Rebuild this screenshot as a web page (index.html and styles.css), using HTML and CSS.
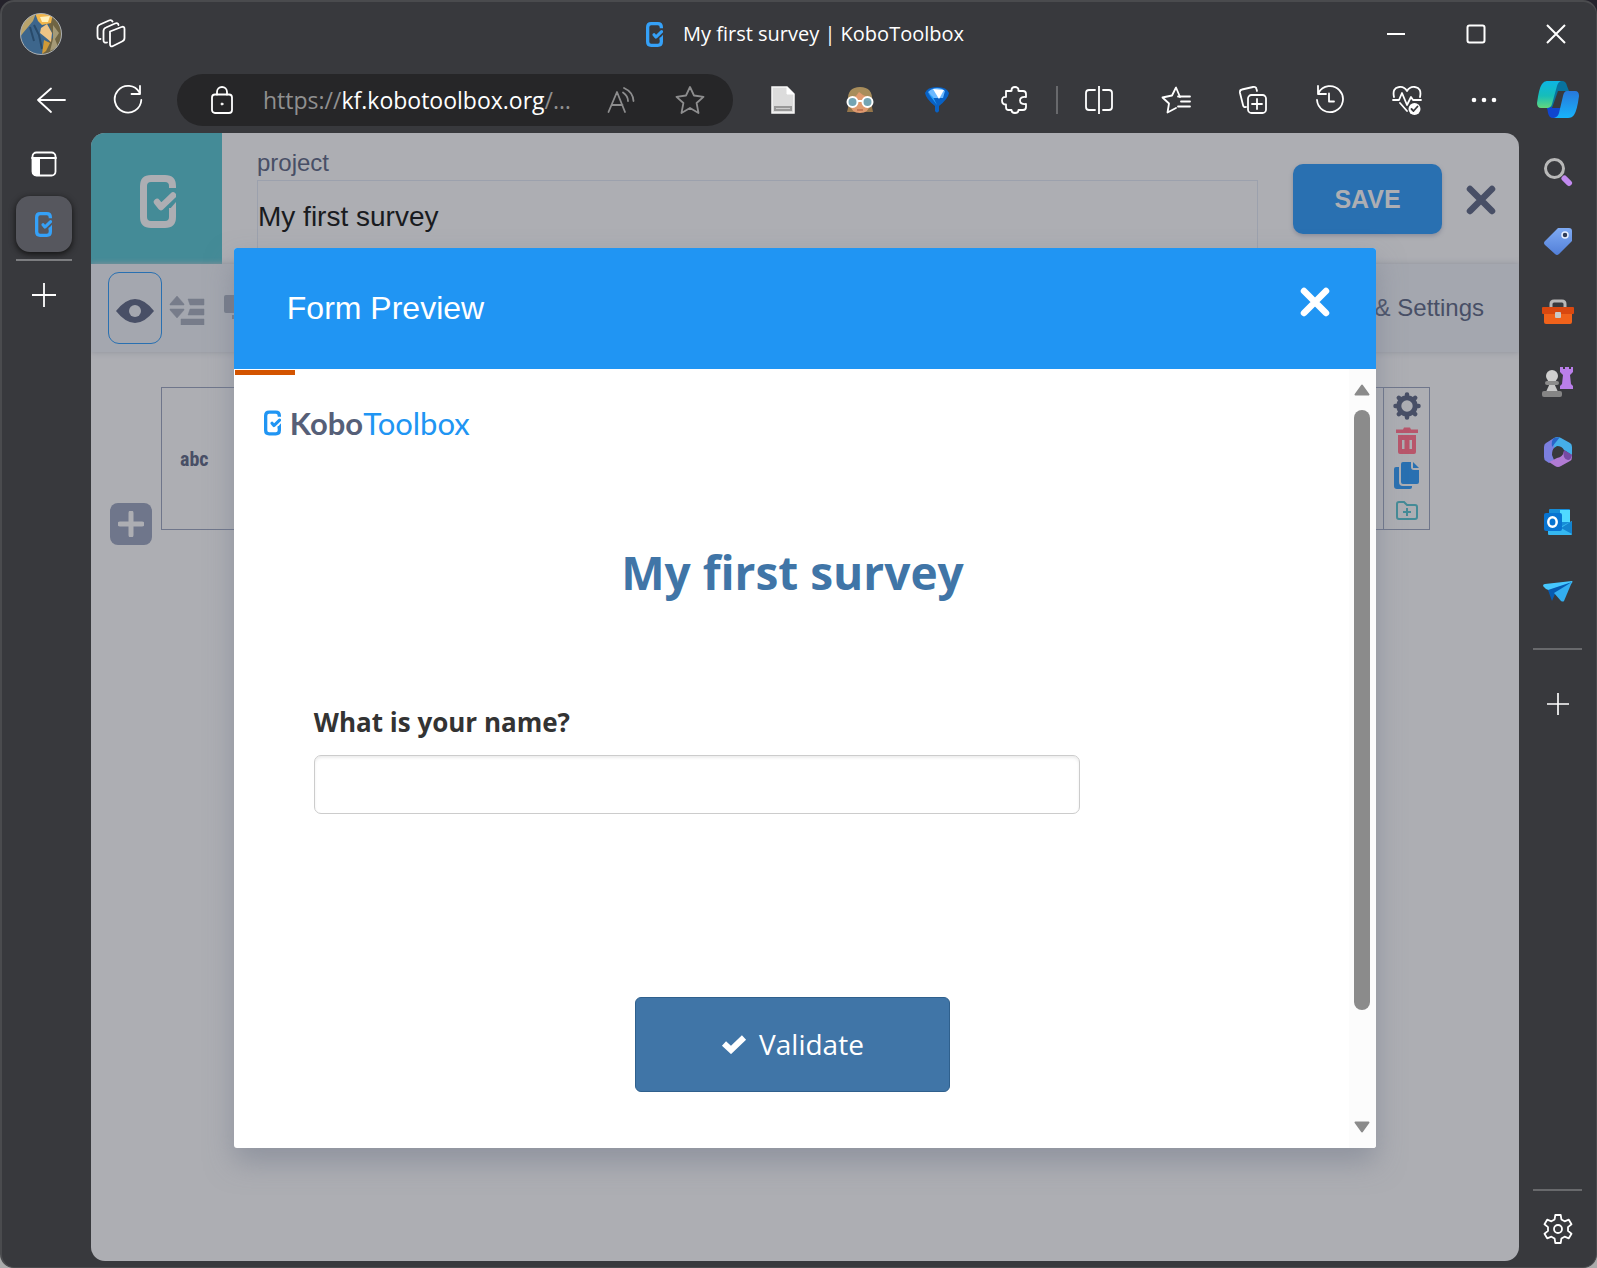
FILE: index.html
```html
<!DOCTYPE html>
<html lang="en">
<head>
<meta charset="utf-8">
<title>My first survey | KoboToolbox</title>
<link rel="stylesheet" href="styles.css">
</head>
<body>
<svg class="defs" aria-hidden="true">
  <symbol id="kobo" viewBox="0 0 36 53">
    <path d="M32.5 13V11Q32.5 3.5 25 3.5H11Q3.5 3.5 3.5 11V42Q3.5 49.5 11 49.5H25Q32.5 49.5 32.5 42V33" fill="none" stroke="currentColor" stroke-width="7"/>
    <path d="M29 35L36 27V38H29z" fill="currentColor"/>
    <path d="M17 27L21 32L33 20.500" fill="none" stroke="currentColor" stroke-width="6.500" stroke-linecap="round" stroke-linejoin="round"/>
  </symbol>
  <symbol id="cross" viewBox="0 0 30 30">
    <path d="M4 4L26 26M26 4L4 26" stroke="currentColor" stroke-width="6.500" stroke-linecap="round"/>
  </symbol>
  <symbol id="plus" viewBox="0 0 24 24">
    <path d="M12 0V24M0 12H24" stroke="currentColor" stroke-width="1.800"/>
  </symbol>
</svg>

<div class="window">
  <header class="titlebar">
    <div class="title-left">
      <button class="avatar" aria-label="Profile">
        <svg width="42" height="42" viewBox="0 0 42 42">
          <defs><clipPath id="round"><circle cx="21" cy="21" r="20.500"/></clipPath></defs>
          <g clip-path="url(#round)">
            <rect width="42" height="42" fill="#3d668c"/>
            <path d="M0 0H16L13 8L3 20L0 24z" fill="#b9a46c"/>
            <path d="M28 0H42V42H22L27 30L34 24L29 12z" fill="#6f6443"/>
            <path d="M33 12L39 20L35 26L38 34L30 38L33 26z" fill="#a59a77"/>
            <path d="M15 0H33L31 10L22 12L18 8z" fill="#f2b64a"/>
            <path d="M20 4L30 3L28 9L22 9z" fill="#fff0ba"/>
            <path d="M21 15L27 11L32 20L31 29L25 24L20 20z" fill="#eec486"/>
            <path d="M14 12L19 22L22 36M10 14L14 28" stroke="#284a6a" stroke-width="2" fill="none"/>
            <path d="M24 27L30 30L26 38L22 41z" fill="#d09a37"/>
          </g>
          <circle cx="21" cy="21" r="20.500" fill="none" stroke="#aeb1b3"/>
        </svg>
      </button>
      <button class="icon" aria-label="Workspaces">
        <svg width="30" height="30" viewBox="0 0 30 30" class="line">
          <path d="M14 12.500L25.500 8Q28.500 7 28.500 10V19Q28.500 21.500 26 22.500L17 27Q14 28.500 14 25V14z"/>
          <path d="M11 23.500Q7.500 24.500 7.500 21V12Q7.500 9.500 10 8.500L19 4.500Q22 3.500 22.500 6"/>
          <path d="M4.500 20Q1.500 20.500 1.500 17V9Q1.500 6.500 4 5.500L13 1.500Q15.500 .5 16.500 2.500"/>
        </svg>
      </button>
    </div>
    <div class="title-text">
      <svg class="favicon" width="17" height="25"><use href="#kobo"/></svg>
      <span>My first survey | KoboToolbox</span>
    </div>
    <div class="controls">
      <button aria-label="Minimize"><svg width="20" height="20"><path d="M1 10H19" stroke="#fff" stroke-width="2"/></svg></button>
      <button aria-label="Maximize"><svg width="20" height="20"><rect x="1.500" y="1.500" width="17" height="17" rx="2" fill="none" stroke="#fff" stroke-width="2"/></svg></button>
      <button aria-label="Close window"><svg width="20" height="20"><path d="M1 1L19 19M19 1L1 19" stroke="#fff" stroke-width="2"/></svg></button>
    </div>
  </header>

  <nav class="toolbar" aria-label="Browser toolbar">
    <button class="tool" aria-label="Back"><svg width="30" height="30" class="line"><path d="M29 15H2M15 3.500L2 15L15 27"/></svg></button>
    <button class="tool" aria-label="Refresh"><svg width="30" height="30" class="line"><path d="M26.500 7.500A13.300 13.300 0 1 0 28.300 15"/><path d="M27 1V9H18.500"/></svg></button>
    <div class="address">
      <svg width="22" height="28" viewBox="0 0 22 28" class="line"><rect x="1" y="8.500" width="20" height="18.500" rx="3"/><path d="M6 8.500V6A5 5 0 0 1 16 6V8.500"/><circle cx="11" cy="18" r="1" fill="#fff" stroke-width="1"/></svg>
      <p class="url">https://<b>kf.kobotoolbox.org</b>/…</p>
      <button class="pill-icon" aria-label="Read aloud"><svg width="28" height="26" viewBox="0 0 28 26" class="line dim"><path d="M1.500 25L10 5L18 25M4.500 18H15.500M16 5.500Q21 9 21 14M17 1Q26 5 26.500 14"/></svg></button>
      <button class="pill-icon" aria-label="Favorite"><svg width="30" height="28" viewBox="0 0 30 28" class="line dim"><path d="M15 1L19 9.500L28.500 10.800L21.600 17L23.500 27L15 22L6.500 27L8.400 17L1.500 10.800L11 9.500z"/></svg></button>
    </div>
    <button class="tool" aria-label="Document extension"><svg width="24" height="28" viewBox="0 0 24 28"><path d="M1 1H16L23 8V27H1z" fill="#dcdcdc" stroke="#f7f7f7" stroke-width="1.500"/><path d="M16 1V8H23" fill="#fff" stroke="#fff"/><rect x="3" y="20" width="18" height="5" fill="#999"/><path d="M5 22.500H19" stroke="#ccc"/></svg></button>
    <button class="tool" aria-label="Reader extension"><svg width="28" height="28" viewBox="0 0 28 28"><path d="M3 18L1 26H27L25 16z" fill="#96764a"/><path d="M2 15Q1 1 14 1T26 15z" fill="#a88d5b"/><path d="M4 12L10 10L13 6L17 9L24 12V18Q23 27 14 27T4 18z" fill="#df9a6f"/><circle cx="6.500" cy="16" r="5" fill="#75a4b3" stroke="#fff" stroke-width="2"/><circle cx="21.500" cy="16" r="5" fill="#75a4b3" stroke="#fff" stroke-width="2"/><path d="M11.500 15H16.500" stroke="#fff" stroke-width="2"/><path d="M11 24H17" stroke="#a8553a"/></svg></button>
    <button class="tool" aria-label="Map extension"><svg width="24" height="28" viewBox="0 0 24 28"><path d="M0 7Q2 1 12 1T24 7Q23 13 14 20V25Q12 28 10 25V20Q1 13 0 7z" fill="#0861c5"/><path d="M3 6Q7 2 12 2T20 5L18 12H8z" fill="#6bb9ff"/><path d="M8 3L19 4L14 13z" fill="#fff"/><path d="M3 7L12 19L8 11z" fill="#27a4ff"/></svg></button>
    <button class="tool" aria-label="Extensions"><svg width="26" height="28" viewBox="0 0 26 28" class="line"><path d="M5 5H10Q11 5 10.500 4Q10.500 1 14 1T17.500 4Q17 5 18 5H22Q25 5 25 8V11Q19 10.500 19 14.500T25 18V21Q25 24 22 24H17.500Q17.500 27 14 27T10.500 24H7Q5 24 5 21V18.500Q1 18.500 1 14.500T5 11z"/></svg></button>
    <i class="divider"></i>
    <button class="tool" aria-label="Split screen"><svg width="28" height="28" viewBox="0 0 28 28" class="line"><path d="M14 0V28M10 4H4Q1 4 1 7V21Q1 24 4 24H10M18 4H24Q27 4 27 7V21Q27 24 24 24H18"/></svg></button>
    <button class="tool" aria-label="Favorites"><svg width="30" height="28" viewBox="0 0 30 28" class="line"><path d="M19 11L15 1.500L11 9.500L1.500 11.500L8 17.500L6.500 26.500L15 22"/><path d="M17 10.500H29M20 15.500H29M17 20.500H29"/></svg></button>
    <button class="tool" aria-label="Collections"><svg width="28" height="28" viewBox="0 0 28 28" class="line"><rect x="9" y="9" width="18" height="18" rx="3.500"/><path d="M18 13V23M13 18H23M7 21Q4.500 21.500 4 19L1 7Q.5 4 3 3.500L14 1Q17 .5 17.500 3L18 5"/></svg></button>
    <button class="tool" aria-label="History"><svg width="30" height="30" viewBox="0 0 30 30" class="line"><path d="M3.500 8A13 13 0 1 1 2 15M3 1V9H11M14 8.500V16.500H19"/></svg></button>
    <button class="tool" aria-label="Browser essentials"><svg width="30" height="30" viewBox="0 0 30 30" class="line"><path d="M2 12Q0 3 7 2Q12 1 15 6Q18 1 23 2Q30 3 28 12M1 15H7L10 8L15 20L19 12L21 15H29M8 18L15 26"/><circle cx="22.500" cy="24" r="6" fill="#fff" stroke="none"/><path d="M19.500 24L21.500 26L25.500 21.500" stroke="#38393d"/></svg></button>
    <button class="tool" aria-label="More"><svg width="26" height="6"><g fill="#fff"><circle cx="3" cy="3" r="2.300"/><circle cx="13" cy="3" r="2.300"/><circle cx="23" cy="3" r="2.300"/></g></svg></button>
    <button class="tool" aria-label="Copilot"><svg width="42" height="38" viewBox="0 0 42 38"><defs><linearGradient id="c1" x2="0" y2="1"><stop stop-color="#0cb5e4"/><stop offset=".55" stop-color="#16bdb9"/><stop offset="1" stop-color="#63d87d"/></linearGradient><linearGradient id="c2" x2="0" y2="1"><stop stop-color="#2878dc"/><stop offset="1" stop-color="#17b3fb"/></linearGradient></defs><path d="M9 0H25Q29 0 30 5L32 10H26Q22 10 20 15L16 28H10z" fill="#08739f"/><path d="M10 26H20L24 16L28 20L27 37H16Q12 37 11 32z" fill="#1045cf"/><path d="M15 27L21 10H29L24 27z" fill="#38393d"/><path d="M10 0H24Q21 1 20 5L15 23Q14 27 10 27H4Q0 27 0 22Q2 7 5 3Q7 0 10 0z" fill="url(#c1)"/><path d="M30 10H38Q42 10 42 15Q40 30 37 34Q35 37 31 37H17Q21 36 22 32L26 15Q27 10 30 10z" fill="url(#c2)"/></svg></button>
  </nav>

  <aside class="rail left" aria-label="Tabs">
    <button class="icon tab-toggle" aria-label="Tab actions"><svg width="26" height="26" viewBox="0 0 26 26" class="line"><rect x="1.500" y="1.500" width="23" height="23" rx="4"/><path d="M1 7H25M8 7V24"/><path d="M2 7H8V24H4L2 22z" fill="#fff"/></svg></button>
    <button class="tab" aria-label="My first survey"><svg class="favicon" width="17" height="25"><use href="#kobo"/></svg></button>
    <hr>
    <button class="icon new-tab" aria-label="New tab"><svg width="24" height="24"><use href="#plus"/></svg></button>
  </aside>

  <main class="page">
    <header class="app-head">
      <a class="brand" href="#" aria-label="KoboToolbox home"><svg width="36" height="53"><use href="#kobo"/></svg></a>
      <div class="project">
        <label for="name">project</label>
        <input id="name" type="text" value="My first survey">
      </div>
      <button class="save">SAVE</button>
      <button class="close-form" aria-label="Close form"><svg width="30" height="30"><use href="#cross"/></svg></button>
    </header>
    <div class="form-tools">
      <button class="preview" aria-label="Preview form"><svg width="38" height="24" viewBox="0 0 38 24"><path d="M0 12Q19-12 38 12Q19 36 0 12z" fill="#484f66"/><circle cx="19" cy="12" r="6" fill="#a4a7af"/></svg></button>
      <button class="tool-ghost" aria-label="Collapse questions"><svg width="36" height="30" viewBox="0 0 36 30" fill="#777c8a"><path d="M8 1L15 9V10H1V9zM1 14H15V15L8 23L1 15zM19 4H35V10H21zM21 14H35V20H19zM12 24H35V30H12z" stroke="#777c8a" stroke-linejoin="round" stroke-width=".5"/></svg></button>
      <button class="tool-ghost" aria-label="Group questions"><svg width="36" height="30" viewBox="0 0 36 30" fill="#777c8a"><rect y="0" width="22" height="18" rx="2"/><rect x="8" y="20" width="26" height="4"/></svg></button>
      <a class="settings" href="#">&amp; Settings</a>
    </div>
    <div class="canvas">
      <button class="add" aria-label="Add question"><svg width="26" height="26"><path d="M13 2V24M2 13H24" stroke="#adaeb3" stroke-width="5" stroke-linecap="round"/></svg></button>
      <section class="question">
        <span class="kind">abc</span>
        <div class="actions">
          <button aria-label="Question settings"><svg width="28" height="28" viewBox="-14 -14 28 28" stroke="#484f66" fill="none"><circle r="8.200" stroke-width="5"/><path d="M0-11V-11.500M0 11V11.500M-11 0H-11.500M11 0H11.500M7.800-7.800L8.200-8.200M-7.800-7.800L-8.200-8.200M7.800 7.800L8.200 8.200M-7.800 7.800L-8.200 8.200" stroke-width="4.500" stroke-linecap="round"/></svg></button>
          <button aria-label="Delete question"><svg width="24" height="28" viewBox="0 0 24 28"><path d="M1 2.500H8L9 .5H15L16 2.500H23V6H1zM3 8H21V25Q21 27 19 27H5Q3 27 3 25zM7 13V22H9.500V13zM14.500 13V22H17V13z" fill="#b8566b" fill-rule="evenodd"/></svg></button>
          <button aria-label="Duplicate question"><svg width="26" height="28" viewBox="0 0 26 28" fill="#2970b1"><path d="M9 0H17V5Q17 8 20 8H25V20Q25 22 23 22H9Q7 22 7 20V2Q7 0 9 0z"/><path d="M19 0L25 6H19z"/><path d="M2 5H5V20Q5 24 9 24H18V25Q18 27 16 27H3Q0 27 0 24V7Q0 5 2 5z"/></svg></button>
          <button aria-label="Add to library"><svg width="22" height="20" viewBox="0 0 22 20" fill="none" stroke="#448b97" stroke-width="2"><path d="M1 3Q1 1 3 1H8L11 4H19Q21 4 21 6V16Q21 18 19 18H3Q1 18 1 16zM11 7V15M7 11H15"/></svg></button>
        </div>
      </section>
    </div>

    <div class="overlay">
      <section class="modal" role="dialog" aria-labelledby="dialog-title">
        <header class="modal-head">
          <h2 id="dialog-title">Form Preview</h2>
          <button aria-label="Close preview"><svg width="30" height="30"><use href="#cross"/></svg></button>
        </header>
        <div class="modal-body">
          <form class="survey">
            <div class="progress"></div>
            <div class="logo"><svg width="17" height="26"><use href="#kobo"/></svg><span class="kobo">Kobo</span><span class="toolbox">Toolbox</span></div>
            <h1>My first survey</h1>
            <div class="field">
              <label for="answer">What is your name?</label>
              <input id="answer" type="text">
            </div>
            <button class="validate" type="button"><svg width="26" height="20" viewBox="0 0 26 20"><path d="M3 9.500L10 16L23 3.500" fill="none" stroke="#fff" stroke-width="6"/></svg>Validate</button>
          </form>
          <div class="scroll" aria-hidden="true">
            <svg width="16" height="12"><path d="M8 1.500L14.500 10.500H1.500z" fill="#8b8b8b" stroke="#8b8b8b" stroke-width="2" stroke-linejoin="round"/></svg>
            <div class="track"><div class="thumb"></div></div>
            <svg width="16" height="12"><path d="M8 10.500L14.500 1.500H1.500z" fill="#8b8b8b" stroke="#8b8b8b" stroke-width="2" stroke-linejoin="round"/></svg>
          </div>
        </div>
      </section>
    </div>
  </main>

  <aside class="rail right" aria-label="Sidebar">
    <button class="side" aria-label="Search"><svg width="30" height="30" viewBox="0 0 30 30"><circle cx="11.500" cy="11.500" r="9" fill="none" stroke="#b8b8b8" stroke-width="3"/><path d="M21.500 21.500L26 26" stroke="#c28af0" stroke-width="6" stroke-linecap="round"/></svg></button>
    <button class="side" aria-label="Shopping"><svg width="30" height="30" viewBox="0 0 30 30"><defs><linearGradient id="tg" x2="0" y2="1"><stop stop-color="#7fabf4"/><stop offset="1" stop-color="#527fd8"/></linearGradient></defs><path d="M15 1H26Q29 1 29 4V14L16 27Q14 29 12 27L2 18Q0 16 2 14z" fill="url(#tg)"/><circle cx="22" cy="8" r="3" fill="#303c57" stroke="#e6efff" stroke-width="1.500"/></svg></button>
    <button class="side" aria-label="Tools"><svg width="32" height="26" viewBox="0 0 32 26"><path d="M9 8V5Q9 2 12 2H20Q23 2 23 5V8" fill="none" stroke="#b7b7b7" stroke-width="3"/><rect x="2" y="10" width="28" height="15" rx="2" fill="#f0621b"/><rect y="8" width="32" height="7" rx="1" fill="#d94810"/><rect x="13" y="13" width="6" height="6" rx="1" fill="#c9c9c9"/></svg></button>
    <button class="side" aria-label="Games"><svg width="32" height="32" viewBox="0 0 32 32"><path d="M18 1H21V3H23V1H27V3H29V1H31V6L28 9L29 18L31 20V23H18V20L20 18L21 9L18 6z" fill="#ba7fea"/><circle cx="10" cy="10" r="6" fill="#cfcfcf"/><path d="M8 17H12L16 26H4z" fill="#c8c8c8"/><rect x="3" y="15" width="14" height="4" rx="2" fill="#8c8c8c"/><rect y="25" width="20" height="6" rx="2" fill="#858585"/></svg></button>
    <button class="side" aria-label="Microsoft 365"><svg width="28" height="30" viewBox="0 0 28 30"><path d="M10 1Q14-1 17 1L26 6Q28 7 28 10V18L20 13Q18 9 13 9L10 11z" fill="#45aee8"/><path d="M10 1V11Q8 13 8 18L10 23L5 26L2 24Q0 23 0 20V10Q0 7 2 6z" fill="#7b7fdf"/><path d="M8 10L16 0L10 1Q7 3 8 10z" fill="#2865c8"/><path d="M5 25L13 21Q19 20 20 14L28 18V20Q28 23 26 24L17 29Q14 31 11 29z" fill="#b17bd4"/><path d="M20 13L28 18Q27 23 24 23Q18 22 20 13z" fill="#764aa3"/></svg></button>
    <button class="side" aria-label="Outlook"><svg width="28" height="28" viewBox="0 0 28 28"><rect x="5" y="1" width="21" height="17" rx="1" fill="#168dd8"/><rect x="16" y="2" width="10" height="12" fill="#50d9ff"/><path d="M4 18H18L28 13V26Q28 27 27 27H5Q4 27 4 26z" fill="#35b8f1"/><path d="M17 20L28 13V26z" fill="#1383cf"/><rect y="5" width="18" height="18" rx="2" fill="#0874d1"/><ellipse cx="8.500" cy="14" rx="4.200" ry="4.800" fill="none" stroke="#fff" stroke-width="2.500"/></svg></button>
    <button class="side" aria-label="Drop"><svg width="30" height="22" viewBox="0 0 30 22"><path d="M0 5Q0 3 2 3L29 0Q30 0 29 2L10 11L3 8z" fill="#46c8ff"/><path d="M5 9L29 1L12 13L9 20Z" fill="#075bb0"/><path d="M11 12L29 1L21 20Q20 21 18 20z" fill="#33aef0"/></svg></button>
    <hr>
    <button class="icon customize" aria-label="Customize"><svg width="22" height="22"><use href="#plus"/></svg></button>
    <hr class="bottom-rule">
    <button class="icon prefs" aria-label="Settings"><svg width="30" height="30" viewBox="-15 -15 30 30" class="line"><path d="M-3.400-9.600L-2.700-14H2.700L3.400-9.600L6.600-7.700L10.800-9.300L13.500-4.700L10-1.900V1.900L13.500 4.700L10.800 9.300L6.600 7.700L3.400 9.600L2.700 14H-2.700L-3.400 9.600L-6.600 7.700L-10.800 9.300L-13.500 4.700L-10 1.900V-1.900L-13.500-4.700L-10.800-9.300L-6.600-7.700z"/><circle r="4"/></svg></button>
  </aside>
</div>
</body>
</html>
```
FILE: styles.css
```css
* { box-sizing: border-box; }
body {
  margin: 0;
  background: linear-gradient(#24222b 0 44px, #50545c 44px 72px, #b5b5b5 72px 106px, #3d3e40 106px 298px, #aaabab 298px);
  font-family: "Open Sans", "Noto Sans", sans-serif;
}
button { border: 0; padding: 0; margin: 0; background: none; color: inherit; font: inherit; cursor: pointer; display: grid; place-items: center; flex-shrink: 0; }
a { text-decoration: none; color: inherit; }
svg { display: block; flex-shrink: 0; }
hr { border: 0; margin: 0; height: 2px; background: #68696c; flex-shrink: 0; }
.defs { position: absolute; width: 0; height: 0; }
.line { fill: none; stroke: #fff; stroke-width: 1.8px; stroke-linecap: round; stroke-linejoin: round; }
.dim { stroke: #8d8d8e; }
.favicon { color: #35a1f8; }

.window {
  display: grid;
  grid-template: 66px 65px 1fr / 89px 1fr 77px;
  height: 100vh;
  padding-bottom: 6px;
  border: 1px solid #4a4b4e;
  border-width: 2px 1px 1px 2px;
  border-radius: 14px;
  background: #38393d;
  color: #fff;
}

/* Title bar */
.titlebar { grid-column: 1 / -1; display: grid; grid-template-columns: 1fr auto 1fr; align-items: center; padding-bottom: 2px; }
.title-left { display: flex; align-items: center; gap: 34px; padding-left: 18px; }
.title-text { display: flex; align-items: center; gap: 20px; font-size: 20px; line-height: 28px; padding-left: 12px; }
.controls { display: flex; justify-content: flex-end; }
.controls button { width: 80px; height: 60px; }

/* Toolbar */
.toolbar { grid-column: 1 / -1; display: flex; align-items: center; padding: 0 0 2px 10px; }
.tool { width: 77px; height: 52px; }
.divider { width: 2px; height: 28px; margin: 0 2px 0 4px; background: #68696c; }
.tool:last-child { width: 74px; padding-right: 2px; }
.address { flex: 1; min-width: 0; height: 52px; margin: 0 11px; border-radius: 26px; background: #262628; display: flex; align-items: center; padding: 0 9px 0 34px; }
.url { flex: 1; min-width: 0; margin: 0 0 0 30px; font-size: 23px; line-height: 32px; color: #909090; white-space: nowrap; }
.url b { font-weight: 400; color: #fff; }
.pill-icon { width: 69px; height: 52px; }

/* Side rails */
.rail { display: flex; flex-direction: column; align-items: center; }
.left { padding-right: 6px; }
.tab-toggle { margin-top: 18px; }
.tab { width: 56px; height: 56px; margin: 19px 0 7px; border-radius: 14px; background: #56575e; box-shadow: 0 2px 6px #111; }
.left hr { width: 56px; background: #7c7d80; }
.new-tab { margin-top: 22px; }
.right { padding-top: 4px; }
.side { width: 77px; height: 70px; }
.right hr { width: 49px; margin-top: 21px; }
.customize { margin-top: 43px; }
.right .bottom-rule { margin-top: auto; }
.prefs { margin: 23px 0 17px; }

/* Form builder page */
.page { position: relative; overflow: hidden; border-radius: 14px; background: #adaeb3; color: #484f66; font-family: "Liberation Sans", Arial, sans-serif; display: flex; flex-direction: column; }
.app-head { display: flex; height: 131px; }
.brand { width: 131px; padding: 5px 0 0 2px; display: grid; place-items: center; background: #448b97; color: #adaeb3; }
.project { flex: 1; margin: 16px 35px 0; display: flex; flex-direction: column; }
.project label { font-size: 24px; line-height: 28px; margin-bottom: 3px; }
.project input { flex: 1; width: 100%; padding: 0; border: 1px solid #9ca1ad; background: none; color: #191b20; font: 28px "Liberation Sans", Arial, sans-serif; padding-bottom: 11px; }
.save { width: 149px; height: 70px; margin-top: 31px; border-radius: 10px; background: #2970b1; color: #adaeb3; font-size: 25px; font-weight: 700; box-shadow: 0 2px 4px #8a8e9c; }
.close-form { width: 77px; margin-top: 3px; }
.form-tools { display: flex; align-items: center; height: 88px; padding: 0 35px 0 17px; background: #a4a7af; box-shadow: 0 0 6px #8e919c; }
.preview { width: 54px; height: 72px; margin-right: 7px; padding-top: 6px; border: 1px solid #2970b1; border-radius: 11px; }
.tool-ghost { margin: 4px 19px 0 0; }
.settings { margin-left: auto; font-size: 24px; line-height: 28px; }
.canvas { display: flex; align-items: flex-end; padding: 35px 89px 0 19px; }
.add { width: 42px; height: 42px; margin: 0 9px -15px 0; border-radius: 8px; background: #6f768b; }
.question { flex: 1; height: 143px; display: flex; justify-content: space-between; align-items: center; border: 1px solid #6f768b; }
.kind { padding-left: 18px; font: 700 20px/28px "Roboto Condensed", "Liberation Sans Narrow", sans-serif; }
.actions { align-self: stretch; width: 46px; padding: 2px 0; border-left: 1px solid #6f768b; display: flex; flex-direction: column; align-items: center; justify-content: space-between; }
.actions button { height: 31px; }

/* Preview dialog */
.overlay { position: absolute; inset: 0; padding-top: 2px; display: grid; place-items: center; }
.modal { width: 80%; height: 80%; display: flex; flex-direction: column; overflow: hidden; border-radius: 3px; background: #fff; box-shadow: 0 14px 28px #757b8c88; }
.modal-head { height: 121px; flex-shrink: 0; display: flex; align-items: center; justify-content: space-between; padding: 0 46px 0 53px; background: #2095f3; color: #fff; }
.modal-head h2 { margin: 0; font-size: 32px; line-height: 40px; font-weight: 400; }
.modal-head button { padding-bottom: 12px; }
.modal-body { flex: 1; min-height: 0; display: flex; }
.survey { flex: 1; min-width: 0; padding: 0 78px 0 80px; display: flex; flex-direction: column; font-family: "Open Sans", sans-serif; }
.progress { width: 60px; height: 5px; margin: 1px 0 0 -79px; background: #d35400; }
.logo { display: flex; align-items: center; height: 40px; margin: 28px 0 0 -50px; font-family: Lato, sans-serif; font-size: 31px; color: #2095f3; }
.kobo { margin-left: 9px; color: #565f78; font-weight: 700; }
.toolbox { font-weight: 400; }
.survey h1 { margin: 97px 0 0; text-align: center; font-size: 46px; line-height: 64px; color: #4075a7; }
.field { margin-top: 100px; display: flex; flex-direction: column; }
.field label { font-size: 26px; line-height: 36px; font-weight: 700; color: #333; }
.field input { width: 80%; height: 59px; margin-top: 15px; padding: 0 16px; border: 1px solid #ccc; border-radius: 7px; background: #fff; box-shadow: inset 0 2px 3px #00000013; font: 26px "Open Sans", sans-serif; }
.validate { display: flex; align-items: center; justify-content: center; gap: 12px; align-self: center; width: 315px; height: 95px; margin-top: 183px; border: 1px solid #2f608d; border-radius: 6px; background: #4075a7; color: #fff; font-size: 28px; }
.scroll { width: 27px; padding: 15px 2px 15px 0; display: flex; flex-direction: column; align-items: center; background: #fcfcfc; }
.track { flex: 1; padding: 14px 0; }
.thumb { width: 16px; height: 86%; border-radius: 8px; background: #8b8b8b; }
```
